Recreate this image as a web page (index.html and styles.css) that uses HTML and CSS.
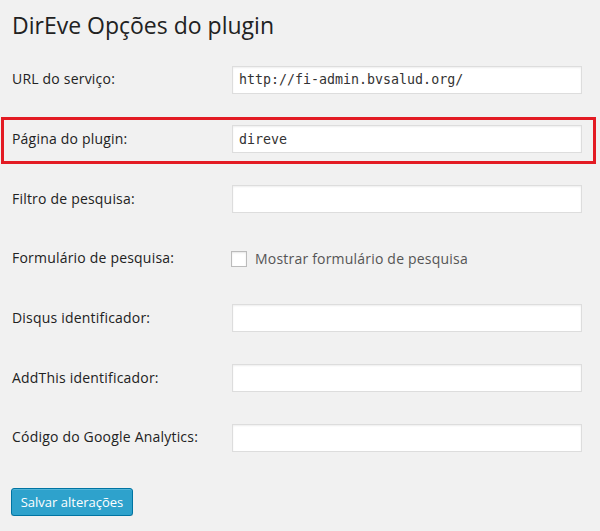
FILE: index.html
```html
<!DOCTYPE html>
<html lang="pt">
    <head>
        <meta charset="UTF-8">
        <title>DirEve Opções do plugin</title>
        <link rel="stylesheet" href="styles.css">
    </head>
    <body>
        <div class="wrap">
            <h2 class="page-title">DirEve Opções do plugin</h2>
            <form class="form-table">
                <div class="form-row">
                    <label class="row-label" for="url">URL do serviço:</label>
                    <input class="text-input" type="text" id="url" value="http://fi-admin.bvsalud.org/">
                </div>
                <!-- highlighted row -->
                <div class="form-row highlight">
                    <label class="row-label" for="page">Página do plugin:</label>
                    <input class="text-input" type="text" id="page" value="direve">
                </div>
                <div class="form-row">
                    <label class="row-label" for="filter">Filtro de pesquisa:</label>
                    <input class="text-input" type="text" id="filter">
                </div>
                <div class="form-row">
                    <span class="row-label">Formulário de pesquisa:</span>
                    <label class="check-label"><span class="checkbox"></span>Mostrar formulário de pesquisa</label>
                </div>
                <div class="form-row">
                    <label class="row-label" for="disqus">Disqus identificador:</label>
                    <input class="text-input" type="text" id="disqus">
                </div>
                <div class="form-row">
                    <label class="row-label" for="addthis">AddThis identificador:</label>
                    <input class="text-input" type="text" id="addthis">
                </div>
                <div class="form-row">
                    <label class="row-label" for="ga">Código do Google Analytics:</label>
                    <input class="text-input" type="text" id="ga">
                </div>
                <div class="submit">
                    <button type="button" class="button-primary">Salvar alterações</button>
                </div>
            </form>
        </div>
    </body>
</html>
```

FILE: styles.css
```css
body {
    margin: 0;
    background-color: #f1f1f1;
    font-family: "Open Sans", "Liberation Sans", sans-serif;
    color: #222;
}
.wrap {
    width: 600px;
}
.page-title {
    margin: 0;
    height: 50px;
    padding-left: 12px;
    font-size: 23px;
    font-weight: 400;
    line-height: 50px;
    color: #222;
}
.form-row {
    position: relative;
    display: flex;
    align-items: center;
    height: 59.67px;
}
.form-row.highlight::after {
    content: "";
    position: absolute;
    top: 7px;
    bottom: 5px;
    left: 1px;
    width: 595px;
    box-sizing: border-box;
    border: 3px solid #e31b23;
}
.row-label {
    width: 220px;
    padding-left: 12px;
    margin-top: -2px;
    font-size: 14px;
    letter-spacing: 0.2px;
    color: #222;
}
.text-input {
    width: 350px;
    height: 28px;
    box-sizing: border-box;
    margin: 0;
    padding: 0 6px;
    border: 1px solid #ddd;
    background-color: #fff;
    box-shadow: inset 0 1px 2px rgba(0, 0, 0, 0.07);
    font-family: "DejaVu Sans Mono", "Liberation Mono", monospace;
    font-size: 13.3px;
    color: #333;
    outline: none;
}
.check-label {
    display: flex;
    align-items: center;
    font-size: 14px;
    letter-spacing: 0.2px;
    color: #555;
}
.checkbox {
    width: 16px;
    height: 16px;
    box-sizing: border-box;
    margin-left: -1px;
    margin-right: 8px;
    border: 1px solid #bbb;
    background-color: #fff;
    box-shadow: inset 0 1px 2px rgba(0, 0, 0, 0.1);
}
.submit {
    padding: 20px 0 0 11px;
}
.button-primary {
    width: 122px;
    height: 28px;
    padding: 0;
    border: 1px solid #0074a2;
    border-radius: 3px;
    background-color: #2ea2cc;
    box-shadow: inset 0 1px 0 rgba(120, 200, 230, 0.5), 0 1px 0 rgba(0, 0, 0, 0.15);
    font-family: "Open Sans", "Liberation Sans", sans-serif;
    font-size: 13px;
    color: #fff;
    cursor: pointer;
}
```
